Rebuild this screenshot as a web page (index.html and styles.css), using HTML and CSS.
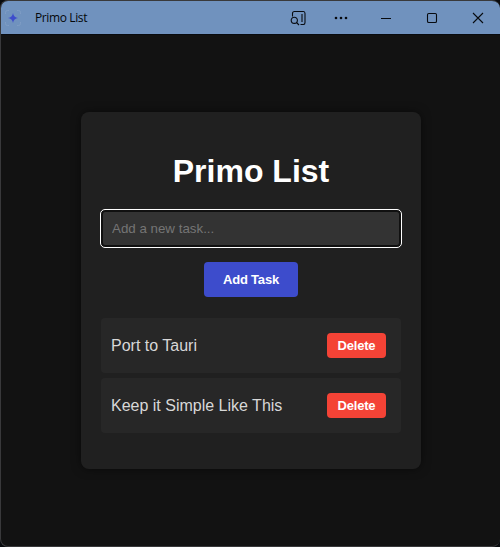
FILE: index.html
```
<!DOCTYPE html>
<html lang="en">
<head>
<meta charset="utf-8">
<title>Primo List</title>
<link rel="stylesheet" href="styles.css">
</head>
<body>
<div class="window">
  <header class="titlebar">
    <svg class="app-icon" width="16" height="16" viewBox="0 0 16 16"><path class="frame" d="M.5 4V2.500Q.5.5 2.500.5H4M12 .5h1.500q2 0 2 2V4M15.500 12v1.500q0 2-2 2H12M4 15.500H2.500q-2 0-2-2V12"/><path class="star" d="M8 3Q8.700 7.300 13 8 8.700 8.700 8 13 7.300 8.700 3 8 7.300 7.300 8 3Z"/></svg>
    <span class="title">Primo List</span>
    <nav class="controls">
      <svg class="search" width="16" height="16" viewBox="0 0 16 16"><path d="M2.500 6.500v-3q0-2 2-2h9q1.500 0 1.500 2v9q0 2-1.500 2h-3M12 4v8"/><circle cx="4.300" cy="10.300" r="3.100"/><path d="m6.500 12.500 2.500 2.500"/></svg>
      <svg class="dots" width="16" height="16" viewBox="0 0 16 16"><circle cx="3" cy="8" r="1.300"/><circle cx="8" cy="8" r="1.300"/><circle cx="13" cy="8" r="1.300"/></svg>
      <svg class="minimize" width="16" height="16" viewBox="0 0 16 16"><path d="M3 8.500h10"/></svg>
      <svg class="maximize" width="16" height="16" viewBox="0 0 16 16"><rect x="3.500" y="3.500" width="9" height="9" rx="1.300"/></svg>
      <svg class="close" width="16" height="16" viewBox="0 0 16 16"><path d="m3 3 10 10M13 3 3 13"/></svg>
    </nav>
  </header>
  <main class="content">
    <section class="card">
      <h1>Primo List</h1>
      <input class="task-input" type="text" placeholder="Add a new task...">
      <button class="add">Add Task</button>
      <ul class="tasks">
        <li><span>Port to Tauri</span><button class="delete">Delete</button></li>
        <li><span>Keep it Simple Like This</span><button class="delete">Delete</button></li>
      </ul>
    </section>
  </main>
</div>
</body>
</html>
```
FILE: styles.css
```
* { box-sizing: border-box; }
html { background: #080a0d; }
body {
  margin: 0;
  height: 547px;
  overflow: hidden;
  font-family: "Liberation Sans", Arial, sans-serif;
}
.window {
  display: flex;
  flex-direction: column;
  height: 547px;
  border: 1px solid #39393b;
  border-right: 0;
  border-radius: 8px;
  overflow: hidden;
  background: #121212;
}
.titlebar {
  display: flex;
  align-items: center;
  flex: 0 0 34px;
  padding: 0 14px 0 4px;
  border-bottom: 1px solid #080b10;
  background: #7092be;
}
.app-icon { flex: none; }
.app-icon .frame { fill: none; stroke: #7f9cc4; }
.app-icon .star { fill: #3d4ccc; }
.title {
  margin-left: 14px;
  font: 12px "Open Sans", "Noto Sans", sans-serif;
  letter-spacing: -.38px;
  color: #05070a;
}
.controls { display: flex; margin-left: auto; }
.controls svg {
  display: block;
  fill: none;
  stroke: #080b10;
  stroke-width: 1.1;
}
.controls .dots { margin-left: 27px; fill: #080b10; stroke: none; }
.controls .minimize { margin-left: 29px; }
.controls .maximize, .controls .close { margin-left: 30px; }
.content { flex: 1; padding: 77px 79px 0 80px; }
.card {
  display: flex;
  flex-direction: column;
  align-items: center;
  width: 340px;
  height: 357px;
  padding: 20px;
  border-radius: 8px;
  background: #202020;
  box-shadow: 0 0 10px rgba(0, 0, 0, .5);
}
h1 {
  margin: 20px 0;
  font-size: 32px;
  line-height: 38px;
  color: #fff;
}
.task-input {
  width: 300px;
  height: 37px;
  padding: 0 9px;
  border: 2px solid #101010;
  border-radius: 4px;
  outline: 1px solid #fff;
  background: #333;
  font: 13.333px "Liberation Sans", Arial, sans-serif;
}
.task-input::placeholder { color: #757575; }
button {
  padding: 0;
  border: 0;
  border-radius: 4px;
  color: #fff;
  font: bold 13px "Liberation Sans", Arial, sans-serif;
  letter-spacing: -.2px;
}
.add {
  width: 94px;
  height: 35px;
  margin-top: 15px;
  background: #3d4ccc;
}
.tasks {
  display: flex;
  flex-direction: column;
  gap: 5px;
  width: 100%;
  margin: 21px 0 0;
  padding: 0;
  list-style: none;
}
.tasks li {
  display: flex;
  align-items: center;
  justify-content: space-between;
  height: 55px;
  padding: 0 15px 0 10px;
  border-radius: 4px;
  background: #272727;
  color: #d8d8d8;
  font-size: 16px;
}
.delete { width: 59px; height: 25px; background: #f44336; }
```
